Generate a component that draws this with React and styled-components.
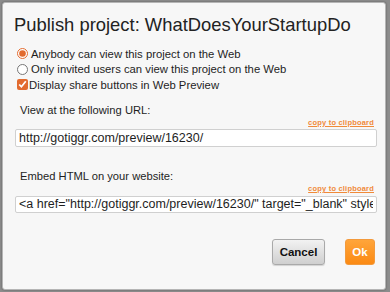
import React from "react";
import styled, { createGlobalStyle } from "styled-components";

const Global = createGlobalStyle`
  html, body { margin: 0; padding: 0; }
  body {
    background: #8c8c8c;
    font-family: "Liberation Sans", Arial, sans-serif;
    width: 390px;
    height: 292px;
    overflow: hidden;
  }
`;

const Dialog = styled.div`
  box-sizing: border-box;
  margin: 2px 0 0 2px;
  width: 384px;
  height: 288px;
  background: #f7f7f7;
  border: 1px solid #b5b5b5;
  border-radius: 3px;
  box-shadow: 0 0 2px rgba(0,0,0,0.4);
  padding: 12px 10px 0 11px;
  display: flex;
  flex-direction: column;
`;

const Title = styled.h1`
  margin: 0;
  font-weight: normal;
  font-size: 18.4px;
  line-height: 20px;
  color: #222;
`;

const Options = styled.div`
  margin-top: 11px;
  display: flex;
  flex-direction: column;
  padding-left: 1px;
`;

const OptionRow = styled.label`
  display: flex;
  align-items: center;
  height: 15.5px;
  font-size: 11.3px;
  color: #1e1e1e;
  gap: ${(p) => (p.$check ? "1px" : "3px")};
`;

const Radio = styled.input.attrs({ type: "radio" })`
  margin: 0 0 0 2px;
  width: 11px;
  height: 11px;
  accent-color: #e26b2f;
`;

const Check = styled.input.attrs({ type: "checkbox" })`
  margin: 0 0 0 2px;
  width: 11px;
  height: 11px;
  accent-color: #e26b2f;
`;

const Field = styled.div`
  display: flex;
  flex-direction: column;
  margin-top: ${(p) => p.$top}px;
  padding-left: 1px;
`;

const FieldLabel = styled.div`
  font-size: 11.2px;
  color: #1e1e1e;
  padding-left: 5px;
  line-height: 13px;
`;

const CopyLink = styled.a`
  align-self: flex-end;
  margin-right: 1px;
  font-size: 7.5px;
  font-weight: bold;
  color: #f08a3a;
  text-decoration: underline;
  letter-spacing: 0.2px;
  line-height: 9px;
  margin-top: 1px;
  cursor: pointer;
`;

const TextBox = styled.input.attrs({ readOnly: true })`
  box-sizing: border-box;
  width: 362px;
  height: 17.5px;
  margin-top: 2.5px;
  padding: 0 3px;
  border: 1px solid #d0d0d0;
  border-radius: 2px;
  background: #fff;
  font-family: "Liberation Sans", Arial, sans-serif;
  font-size: 12.5px;
  color: #1e1e1e;
  outline: none;
`;

const Buttons = styled.div`
  display: flex;
  justify-content: flex-end;
  gap: 20px;
  margin-top: 26px;
`;

const Button = styled.button`
  box-sizing: border-box;
  height: 26px;
  padding: 0 6px;
  border-radius: 3px;
  font-family: "Liberation Sans", Arial, sans-serif;
  font-size: 11.5px;
  font-weight: bold;
  cursor: pointer;
  border: 1px solid ${(p) => (p.$primary ? "#f39a3c" : "#a9a9a9")};
  color: ${(p) => (p.$primary ? "#fff" : "#111")};
  background: ${(p) =>
    p.$primary
      ? "linear-gradient(#ffa53a, #fb8a14)"
      : "linear-gradient(#f2f2f2, #cfcfcf)"};
  box-shadow: ${(p) => (p.$primary ? "none" : "0 1px 1px rgba(0,0,0,0.15)")};
  min-width: ${(p) => (p.$primary ? "30px" : "53px")};
`;

export default function App() {
  return (
    <>
      <Global />
      <Dialog>
        <Title>Publish project: WhatDoesYourStartupDo</Title>
        <Options>
          <OptionRow>
            <Radio name="vis" defaultChecked />
            Anybody can view this project on the Web
          </OptionRow>
          <OptionRow>
            <Radio name="vis" />
            Only invited users can view this project on the Web
          </OptionRow>
          <OptionRow $check>
            <Check defaultChecked />
            Display share buttons in Web Preview
          </OptionRow>
        </Options>
        <Field $top={11}>
          <FieldLabel>View at the following URL:</FieldLabel>
          <CopyLink>copy to clipboard</CopyLink>
          <TextBox defaultValue="http://gotiggr.com/preview/16230/" />
        </Field>
        <Field $top={23.5}>
          <FieldLabel>Embed HTML on your website:</FieldLabel>
          <CopyLink>copy to clipboard</CopyLink>
          <TextBox defaultValue={'<a href="http://gotiggr.com/preview/16230/" target="_blank" style="display:block">'} />
        </Field>
        <Buttons>
          <Button>Cancel</Button>
          <Button $primary>Ok</Button>
        </Buttons>
      </Dialog>
    </>
  );
}
